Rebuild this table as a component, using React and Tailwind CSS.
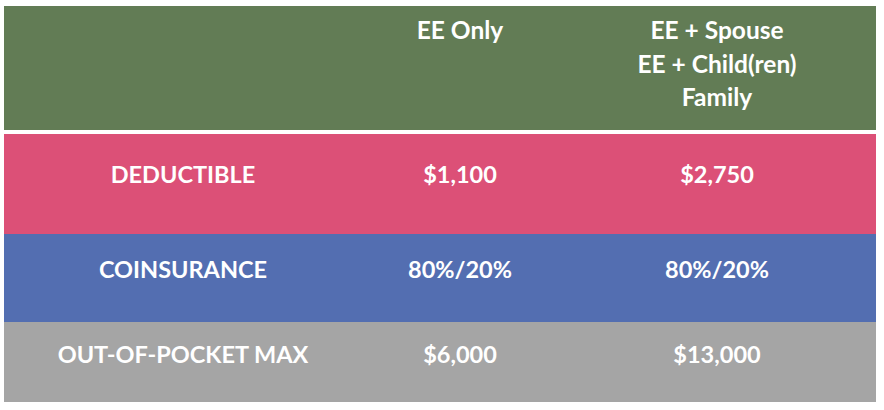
import React from 'react';

const rows = [
	{ label: 'DEDUCTIBLE', ee: '$1,100', fam: '$2,750', bg: 'bg-[#dc5077]', h: 'h-[100px]', pb: 'pb-[18px]' },
	{ label: 'COINSURANCE', ee: '80%/20%', fam: '80%/20%', bg: 'bg-[#536eb1]', h: 'h-[88px]', pb: 'pb-[16px]' },
	{ label: 'OUT-OF-POCKET MAX', ee: '$6,000', fam: '$13,000', bg: 'bg-[#a5a5a5]', h: 'h-[80px]', pb: 'pb-[14px]' },
];

const App = () => {
	return (
		<div className="w-[884px] h-[410px] bg-white pt-[6px] pl-[4px] font-['Lato','Open_Sans',sans-serif] font-bold text-white">
			<div className="w-[872px]">
				<div className="grid grid-cols-[358px_196px_318px] h-[124px] bg-[#627c55] text-[24.5px] leading-[33.5px] text-center pt-[7px]">
					<div></div>
					<div>EE Only</div>
					<div>
						<div>EE + Spouse</div>
						<div>EE + Child(ren)</div>
						<div>Family</div>
					</div>
				</div>
				<div className="h-[4px]"></div>
				{rows.map((row) => (
					<div
						key={row.label}
						className={`grid grid-cols-[358px_196px_318px] ${row.bg} ${row.h} ${row.pb} text-[23.5px] text-center items-center`}
					>
						<div>{row.label}</div>
						<div>{row.ee}</div>
						<div>{row.fam}</div>
					</div>
				))}
			</div>
		</div>
	);
};

export default App;
